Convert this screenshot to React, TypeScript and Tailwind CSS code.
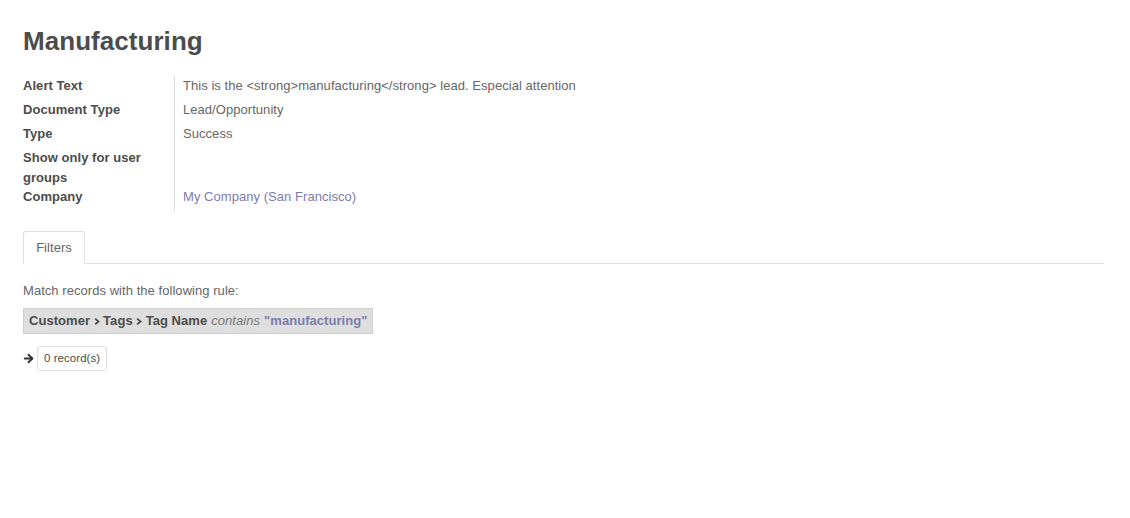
import { ArrowRight } from "lucide-react";

const fields = [
  { label: "Alert Text", value: "This is the <strong>manufacturing</strong> lead. Especial attention" },
  { label: "Document Type", value: "Lead/Opportunity" },
  { label: "Type", value: "Success" },
  { label: "Show only for user groups", value: "" },
  { label: "Company", value: "My Company (San Francisco)", link: true },
];

export default function App() {
  return (
    <div className="min-h-screen bg-white font-['Liberation_Sans',Arial,sans-serif] text-[13px] tracking-[0.05px] text-[#4c4c4c]">
      <div className="px-[23px] pt-[26px] pr-[26px]">
        <h1 className="text-[26px] font-bold leading-[30px] text-[#4c4c4c]">Manufacturing</h1>

        <div className="mt-[20px] flex">
          <div className="w-[152px] border-r border-[#dcdcdc] pr-[8px]">
            {fields.map((f) => (
              <div
                key={f.label}
                className={
                  f.label === "Show only for user groups"
                    ? "h-[39px] font-bold leading-[19.5px]"
                    : "h-[24px] font-bold leading-[20px]"
                }
              >
                {f.label === "Show only for user groups" ? (
                  <>
                    Show only for user
                    <br />
                    groups
                  </>
                ) : (
                  f.label
                )}
              </div>
            ))}
          </div>
          <div className="pl-[8px] text-[#666666]">
            {fields.map((f) => (
              <div
                key={f.label}
                className={
                  f.label === "Show only for user groups"
                    ? "h-[39px] leading-[20px]"
                    : f.link
                      ? "h-[24px] leading-[20px] text-[#7c7bad]"
                      : "h-[24px] leading-[20px]"
                }
              >
                {f.value}
              </div>
            ))}
          </div>
        </div>

        <div className="mt-[20px] flex w-[1081px] border-b border-[#dee2e6]">
          <div className="-mb-px h-[33px] w-[62px] rounded-t-[3px] border border-b-white border-[#dee2e6] bg-white text-center leading-[31px] text-[#666666]">
            Filters
          </div>
        </div>

        <p className="mt-[18px] leading-[18px] text-[#666666]">Match records with the following rule:</p>

        <div className="mt-[8px] inline-flex h-[26px] items-center border border-[#cfcfcf] bg-[#dedede] px-[5px] leading-[20px]">
          <span className="font-bold">Customer</span>
          <Chevron />
          <span className="font-bold">Tags</span>
          <Chevron />
          <span className="font-bold">Tag Name</span>
          <span className="ml-[4px] italic text-[#777777]">contains</span>
          <span className="ml-[4px] font-bold text-[#7c7bad]">"manufacturing"</span>
        </div>

        <div className="mt-[12px] flex items-center">
          <ArrowRight className="h-[13px] w-[13px] -ml-[1px] text-[#333333]" strokeWidth={3.5} />
          <button className="ml-[2px] h-[25px] rounded-[3px] border border-[#dee2e6] bg-white px-[6px] text-[11.5px] text-[#4c4c4c]">
            0 record(s)
          </button>
        </div>
      </div>
    </div>
  );
}

function Chevron() {
  return (
    <svg viewBox="0 0 8 10" className="mx-[3.5px] h-[9px] w-[6px] text-[#4c4c4c]" fill="none" stroke="currentColor" strokeWidth="2.4">
      <path d="M1.5 1.2 L6 5 L1.5 8.8" />
    </svg>
  );
}
